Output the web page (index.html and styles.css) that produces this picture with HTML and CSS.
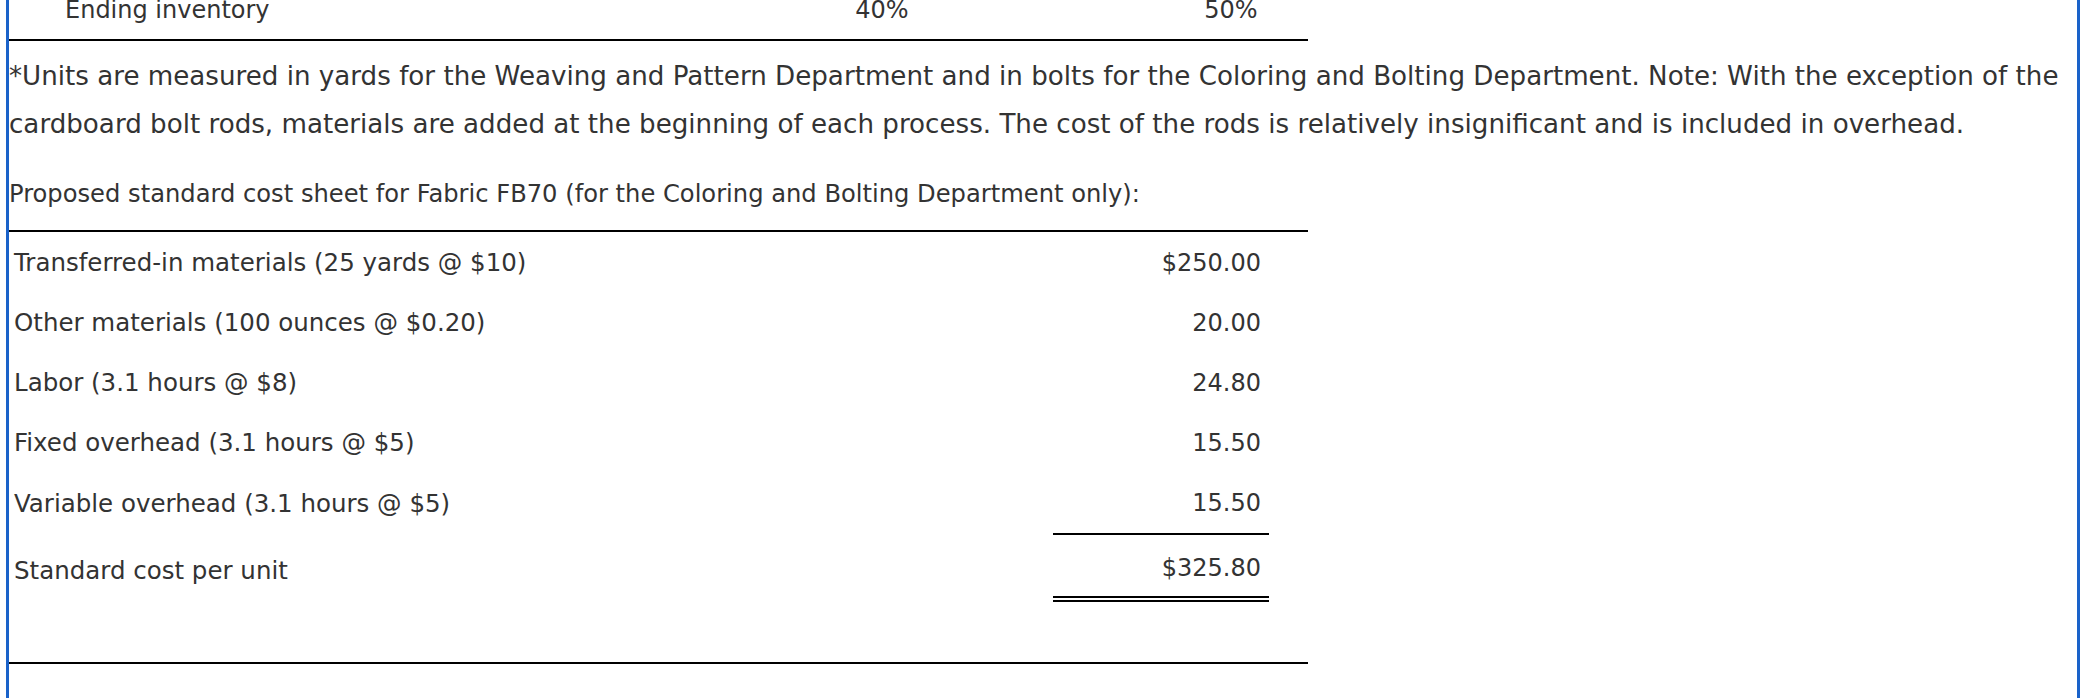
FILE: index.html
```html
<!DOCTYPE html>
<html lang="en">
<head>
<meta charset="utf-8">
<title>Standard cost sheet</title>
<link rel="stylesheet" href="styles.css">
</head>
<body>
<div class="frame">
  <div class="prev-row">
    <div class="prev-label">Ending inventory</div>
    <div class="prev-val">40%</div>
    <div class="prev-val">50%</div>
  </div>
  <p class="note">*Units are measured in yards for the Weaving and Pattern Department and in bolts for the Coloring and Bolting Department. Note: With the exception of the cardboard bolt rods, materials are added at the beginning of each process. The cost of the rods is relatively insignificant and is included in overhead.</p>
  <p class="caption">Proposed standard cost sheet for Fabric FB70 (for the Coloring and Bolting Department only):</p>
  <table class="cost">
    <colgroup><col class="c-label"><col class="c-val"><col class="c-pad"></colgroup>
    <tbody>
      <tr class="r-first"><td class="lbl">Transferred-in materials (25 yards @ $10)</td><td class="val">$250.00</td><td></td></tr>
      <tr><td class="lbl">Other materials (100 ounces @ $0.20)</td><td class="val">20.00</td><td></td></tr>
      <tr><td class="lbl">Labor (3.1 hours @ $8)</td><td class="val">24.80</td><td></td></tr>
      <tr><td class="lbl">Fixed overhead (3.1 hours @ $5)</td><td class="val">15.50</td><td></td></tr>
      <tr class="r-sub"><td class="lbl">Variable overhead (3.1 hours @ $5)</td><td class="val under">15.50</td><td></td></tr>
      <tr class="r-total"><td class="lbl">Standard cost per unit</td><td class="val dbl">$325.80</td><td></td></tr>
      <tr class="spacer"><td></td><td></td><td></td></tr>
    </tbody>
  </table>
</div>
</body>
</html>
```

FILE: styles.css
```css
html, body {
  margin: 0;
  padding: 0;
  height: 100%;
  overflow: hidden;
  background: #fff;
}
body {
  font-family: "DejaVu Sans", Verdana, sans-serif;
  font-size: 24px;
  color: #333;
}
.frame {
  margin-left: 6px;
  border-left: 3px solid #1a62c9;
  border-right: 3px solid #1a62c9;
  min-height: calc(100% + 21px);
  box-sizing: border-box;
}
.prev-row {
  margin-top: -21px;
  width: 1299px;
  height: 58px;
  padding-top: 2px;
  display: grid;
  grid-template-columns: 601px 544px 154px;
  align-items: center;
  border-bottom: 2px solid #000;
  line-height: 28px;
}
.prev-label {
  padding-left: 56px;
}
.prev-val {
  text-align: center;
}
.note {
  margin: 11px 0 0;
  font-size: 26.15px;
  line-height: 48px;
}
.caption {
  margin: 22px 0 0;
  font-size: 24.2px;
  line-height: 48px;
}
.cost {
  margin-top: 12px;
  width: 1299px;
  border-collapse: separate;
  border-spacing: 0;
  border-top: 2px solid #000;
  border-bottom: 2px solid #000;
  table-layout: fixed;
}
.c-label { width: 1044px; }
.c-val { width: 216px; }
.c-pad { width: 39px; }
.cost tr { height: 60px; }
.cost tr.r-first { height: 61px; }
.cost tr.r-sub { height: 62px; }
.cost tr.r-total { height: 67px; }
.cost tr.r-total td { padding-top: 4px; }
.cost td {
  padding: 0;
  vertical-align: middle;
  line-height: 28px;
}
.cost td.lbl {
  padding-left: 5px;
  font-size: 24.5px;
}
.cost td.val {
  text-align: right;
  padding-right: 8px;
}
.cost td.under { border-bottom: 2px solid #000; }
.cost td.dbl { border-bottom: 6px double #000; }
```
